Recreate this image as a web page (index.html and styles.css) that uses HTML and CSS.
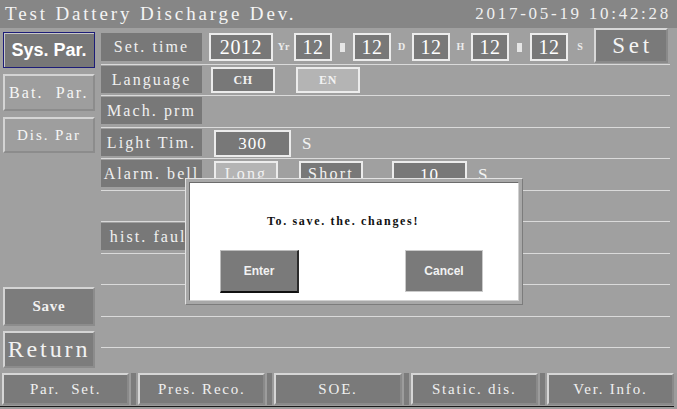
FILE: index.html
```html
<!DOCTYPE html>
<html lang="en">
  <head>
    <meta charset="UTF-8" />
    <meta name="viewport" content="width=device-width, initial-scale=1.0" />
    <title>Test Dattery Discharge Dev.</title>
    <link rel="stylesheet" href="styles.css">
  </head>
  <body>
    <div class="screen">
      <header class="titlebar">
        <span class="title">Test Dattery Discharge Dev.</span>
        <span class="clock">2017-05-19 10:42:28</span>
      </header>

      <div class="middle">
        <aside class="sidebar">
          <button class="side-btn active">Sys. Par.</button>
          <button class="side-btn light">Bat.&nbsp;&nbsp;Par.</button>
          <button class="side-btn light dis">Dis. Par</button>
          <div class="side-bottom">
            <button class="side-btn save">Save</button>
            <button class="side-btn ret">Return</button>
          </div>
        </aside>

        <section class="content">
          <div class="row first">
            <div class="label tall">Set. time</div>
            <div class="field year">2012</div>
            <span class="unit">Yr</span>
            <div class="field">12</div>
            <span class="unit"><i class="tofu"></i></span>
            <div class="field">12</div>
            <span class="unit">D</span>
            <div class="field">12</div>
            <span class="unit">H</span>
            <div class="field">12</div>
            <span class="unit"><i class="tofu"></i></span>
            <div class="field">12</div>
            <span class="unit unit-s">S</span>
            <button class="set-btn">Set</button>
          </div>

          <div class="row">
            <div class="label">Language</div>
            <div class="choice dark lang-ch">CH</div>
            <div class="choice pale lang-en">EN</div>
          </div>

          <div class="row">
            <div class="label">Mach. prm</div>
          </div>

          <div class="row">
            <div class="label">Light Tim.</div>
            <div class="field wide">300</div>
            <span class="suffix">S</span>
          </div>

          <div class="row">
            <div class="label">Alarm. bell</div>
            <div class="option pale opt-long">Long</div>
            <div class="option dark opt-short">Short</div>
            <div class="field wide opt-num">10</div>
            <span class="suffix">S</span>
          </div>

          <div class="row"></div>

          <div class="row">
            <div class="label">hist. fault</div>
          </div>

          <div class="row"></div>
          <div class="row"></div>
          <div class="row"></div>
        </section>
      </div>

      <footer class="navbar">
        <button class="nav-btn">Par.&nbsp;&nbsp;Set.</button>
        <button class="nav-btn">Pres. Reco.</button>
        <button class="nav-btn">SOE.</button>
        <button class="nav-btn">Static. dis.</button>
        <button class="nav-btn">Ver. Info.</button>
      </footer>

      <div class="dialog">
        <div class="dialog-inner">
          <p class="dialog-msg">To. save. the. changes!</p>
          <div class="dialog-actions">
            <button class="dlg-btn enter">Enter</button>
            <button class="dlg-btn cancel">Cancel</button>
          </div>
        </div>
      </div>
    </div>
  </body>
</html>
```

FILE: styles.css
```css
* {
  margin: 0;
  padding: 0;
  box-sizing: border-box;
}

body {
  width: 677px;
  height: 409px;
  overflow: hidden;
  background-color: #a0a0a0;
  color: #f2f2f2;
  font-family: "Liberation Serif", "Times New Roman", serif;
  letter-spacing: 0.14em;
}

button {
  font-family: inherit;
  letter-spacing: inherit;
  color: inherit;
  cursor: pointer;
}

.screen {
  position: relative;
  display: flex;
  flex-direction: column;
  height: 409px;
}

/* title bar */
.titlebar {
  height: 28px;
  background: #868686;
  display: flex;
  justify-content: space-between;
  align-items: center;
  padding: 0 6px 0 5px;
  white-space: nowrap;
}

.title {
  font-size: 19px;
  color: #f4f4f4;
  letter-spacing: 0.15em;
}

.clock {
  font-size: 17px;
  color: #f0f0f0;
  letter-spacing: 0.16em;
}

/* middle part */
.middle {
  flex: 1;
  display: flex;
}

.sidebar {
  width: 101px;
  padding: 4px 0 5px 3px;
  display: flex;
  flex-direction: column;
  gap: 6px;
}

.side-btn {
  width: 92px;
  height: 37px;
  background: #7c7c7c;
  border: 2px solid #d4d4d4;
  border-right-color: #8c8c8c;
  border-bottom-color: #8c8c8c;
  font-size: 15px;
  white-space: nowrap;
}

.side-btn.active {
  height: 36px;
  border: 1px solid #1c1c78;
  box-shadow: inset 1px 1px 0 #c8c8c8;
  background: #777;
  font-family: "Liberation Sans", Arial, sans-serif;
  font-weight: bold;
  font-size: 18px;
  letter-spacing: 0;
  color: #fff;
}

.side-btn.light {
  background: #9e9e9e;
  color: #f6f6f6;
  text-align: left;
  padding-left: 4px;
  font-size: 16px;
  letter-spacing: 0.13em;
}

.side-btn.dis {
  height: 36px;
  text-align: center;
  padding: 0;
  font-size: 15px;
}

.side-bottom {
  margin-top: auto;
  display: flex;
  flex-direction: column;
  gap: 5px;
}

.side-btn.save {
  height: 39px;
  font-weight: bold;
  font-size: 15px;
  letter-spacing: 0.05em;
}

.side-btn.ret {
  font-size: 24px;
  padding: 0;
  letter-spacing: 0.12em;
}

/* parameter rows */
.content {
  flex: 1;
  padding: 5px 7px 0 0;
}

.row {
  height: 31.5px;
  display: flex;
  align-items: flex-start;
  border-bottom: 1px solid #dadada;
}

.label {
  width: 101px;
  height: 27px;
  margin-top: 1px;
  background: #787878;
  font-size: 16px;
  line-height: 27px;
  text-align: center;
  white-space: nowrap;
  overflow: hidden;
  color: #f0f0f0;
  letter-spacing: 0.13em;
}

.label.tall {
  height: 28px;
  margin-top: 0;
  line-height: 28px;
}

.field {
  width: 38px;
  height: 28px;
  background: #787878;
  border: 2px solid #ececec;
  font-size: 20px;
  line-height: 24px;
  text-align: center;
  color: #fff;
  letter-spacing: 0.03em;
}

.field.year {
  width: 64px;
  margin-left: 7px;
}

.unit {
  width: 21px;
  height: 28px;
  font-weight: bold;
  font-size: 10px;
  line-height: 28px;
  text-align: center;
  color: #ececec;
  letter-spacing: 0;
}

.unit-s {
  width: 24px;
}

.tofu {
  display: inline-block;
  width: 5px;
  height: 9px;
  background: #e6e6e6;
  vertical-align: middle;
}

.set-btn {
  margin: -5px 2px 0 auto;
  width: 74px;
  height: 35px;
  background: #7a7a7a;
  border: 2px solid #d8d8d8;
  border-right-color: #8a8a8a;
  border-bottom-color: #8a8a8a;
  font-size: 23px;
  color: #f4f4f4;
  letter-spacing: 0.16em;
  padding-left: 3px;
}

.choice,
.option {
  width: 64px;
  height: 26px;
  margin-top: 2px;
  border: 2px solid #ececec;
  text-align: center;
  line-height: 22px;
}

.choice {
  font-weight: bold;
  font-size: 12px;
  letter-spacing: 0.05em;
}

.option {
  font-size: 16px;
}

.dark {
  background: #787878;
}

.pale {
  background: #b4b4b4;
}

.lang-ch {
  margin-left: 9px;
}

.lang-en {
  margin-left: 21px;
}

.field.wide {
  width: 77px;
  height: 27px;
  margin: 2px 0 0 12px;
  font-size: 17px;
  line-height: 23px;
  letter-spacing: 0.06em;
}

.suffix {
  margin: 2px 0 0 11px;
  font-size: 17px;
  line-height: 27px;
}

.opt-long {
  margin-left: 12px;
}

.opt-short {
  margin-left: 21px;
}

.field.wide.opt-num {
  width: 75px;
  margin-left: 29px;
}

/* bottom navigation */
.navbar {
  height: 36px;
  display: flex;
  gap: 9px;
  padding: 0 3px 0 2px;
  background: #9c9c9c;
  border-bottom: 2px solid #9c9c9c;
  position: relative;
}

.navbar::after {
  content: "";
  position: absolute;
  left: 0;
  right: 3px;
  bottom: 0;
  height: 1px;
  background: #1a1a1a;
}

.nav-btn {
  flex: 1;
  height: 32px;
  background: #7a7a7a;
  border: 2px solid #d6d6d6;
  border-right-color: #8a8a8a;
  border-bottom-color: #8a8a8a;
  font-size: 15px;
  color: #f0f0f0;
  letter-spacing: 0.12em;
  white-space: nowrap;
}

.nav-btn + .nav-btn {
  box-shadow: -2px 0 0 #9c9c9c, -7px 0 0 #7c7c7c;
}

/* confirmation dialog */
.dialog {
  position: absolute;
  left: 185px;
  top: 178px;
  width: 338px;
  height: 127px;
  background: #a8a8a8;
  border: 1px solid #e2e2e2;
  border-right-color: #7c7c7c;
  border-bottom-color: #7c7c7c;
  padding: 3px;
}

.dialog-inner {
  height: 100%;
  background: #fff;
  border: 1px solid #6c6c6c;
  border-right-color: #d0d0d0;
  border-bottom-color: #d0d0d0;
  padding-top: 31px;
}

.dialog-msg {
  font-size: 12px;
  font-weight: bold;
  color: #111;
  text-align: center;
  margin-right: 22px;
  letter-spacing: 0.14em;
}

.dialog-actions {
  display: flex;
  justify-content: space-between;
  padding: 0 35px 0 30px;
  margin-top: 21px;
}

.dlg-btn {
  width: 79px;
  height: 43px;
  background: #7a7a7a;
  font-family: "Liberation Sans", Arial, sans-serif;
  font-weight: bold;
  font-size: 12px;
  letter-spacing: 0;
  color: #f2f2f2;
}

.dlg-btn.enter {
  border: 1px solid #bcbcbc;
  border-right: 2px solid #2a2a2a;
  border-bottom: 2px solid #111;
}

.dlg-btn.cancel {
  width: 78px;
  height: 42px;
  border: 1px solid #cacaca;
}
```
